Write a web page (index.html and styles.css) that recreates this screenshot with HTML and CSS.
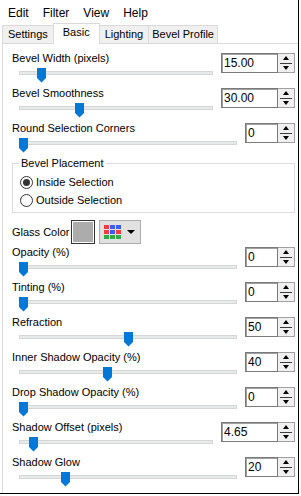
FILE: index.html
```html
<!DOCTYPE html>
<html lang="en">
<head>
    <meta charset="UTF-8">
    <meta name="viewport" content="width=device-width, initial-scale=1.0">
    <title>Inner Bevel</title>
    <link rel="stylesheet" href="styles.css">
</head>
<body>
<div class="window">
    <div class="menubar">
        <span class="menu-item">Edit</span>
        <span class="menu-item">Filter</span>
        <span class="menu-item">View</span>
        <span class="menu-item">Help</span>
    </div>

    <div class="tabs">
        <div class="tab">Settings</div>
        <div class="tab active">Basic</div>
        <div class="tab">Lighting</div>
        <div class="tab">Bevel Profile</div>
    </div>

    <div class="panel">
        <div class="row">
            <div class="row-label">Bevel Width (pixels)</div>
            <div class="slider"><div class="track"></div><svg class="thumb" style="--p:0.097" viewBox="0 0 9 15"><polygon points="0,0 9,0 9,10 4.5,14.5 0,10"/></svg></div>
            <div class="spin"><div class="spin-input">15.00</div><div class="spin-btns"><span class="up"></span><span class="down"></span></div></div>
        </div>

        <div class="row">
            <div class="row-label">Bevel Smoothness</div>
            <div class="slider"><div class="track"></div><svg class="thumb" style="--p:0.303" viewBox="0 0 9 15"><polygon points="0,0 9,0 9,10 4.5,14.5 0,10"/></svg></div>
            <div class="spin"><div class="spin-input">30.00</div><div class="spin-btns"><span class="up"></span><span class="down"></span></div></div>
        </div>

        <div class="row narrow">
            <div class="row-label">Round Selection Corners</div>
            <div class="slider"><div class="track"></div><svg class="thumb" style="--p:0" viewBox="0 0 9 15"><polygon points="0,0 9,0 9,10 4.5,14.5 0,10"/></svg></div>
            <div class="spin"><div class="spin-input">0</div><div class="spin-btns"><span class="up"></span><span class="down"></span></div></div>
        </div>

        <fieldset class="group">
            <legend>Bevel Placement</legend>
            <div class="radio"><span class="dot checked"></span>Inside Selection</div>
            <div class="radio"><span class="dot"></span>Outside Selection</div>
        </fieldset>

        <div class="color-row">
            <span class="color-label">Glass Color</span>
            <span class="swatch"></span>
            <span class="palette-btn">
                <svg width="17" height="14" viewBox="0 0 17 14">
                    <rect x="0" y="0" width="5" height="4" fill="#f23d3d"/>
                    <rect x="6" y="0" width="5" height="4" fill="#3d5cf2"/>
                    <rect x="12" y="0" width="5" height="4" fill="#3d5cf2"/>
                    <rect x="0" y="5" width="5" height="4" fill="#f23d3d"/>
                    <rect x="6" y="5" width="5" height="4" fill="#3d5cf2"/>
                    <rect x="12" y="5" width="5" height="4" fill="#f23d3d"/>
                    <rect x="0" y="10" width="5" height="4" fill="#36a84a"/>
                    <rect x="6" y="10" width="5" height="4" fill="#36a84a"/>
                    <rect x="12" y="10" width="5" height="4" fill="#36a84a"/>
                </svg>
                <span class="caret"></span>
            </span>
        </div>

        <div class="row narrow">
            <div class="row-label">Opacity (%)</div>
            <div class="slider"><div class="track"></div><svg class="thumb" style="--p:0" viewBox="0 0 9 15"><polygon points="0,0 9,0 9,10 4.5,14.5 0,10"/></svg></div>
            <div class="spin"><div class="spin-input">0</div><div class="spin-btns"><span class="up"></span><span class="down"></span></div></div>
        </div>

        <div class="row narrow">
            <div class="row-label">Tinting (%)</div>
            <div class="slider"><div class="track"></div><svg class="thumb" style="--p:0" viewBox="0 0 9 15"><polygon points="0,0 9,0 9,10 4.5,14.5 0,10"/></svg></div>
            <div class="spin"><div class="spin-input">0</div><div class="spin-btns"><span class="up"></span><span class="down"></span></div></div>
        </div>

        <div class="row narrow">
            <div class="row-label">Refraction</div>
            <div class="slider"><div class="track"></div><svg class="thumb" style="--p:0.5" viewBox="0 0 9 15"><polygon points="0,0 9,0 9,10 4.5,14.5 0,10"/></svg></div>
            <div class="spin"><div class="spin-input">50</div><div class="spin-btns"><span class="up"></span><span class="down"></span></div></div>
        </div>

        <div class="row narrow">
            <div class="row-label">Inner Shadow Opacity (%)</div>
            <div class="slider"><div class="track"></div><svg class="thumb" style="--p:0.4" viewBox="0 0 9 15"><polygon points="0,0 9,0 9,10 4.5,14.5 0,10"/></svg></div>
            <div class="spin"><div class="spin-input">40</div><div class="spin-btns"><span class="up"></span><span class="down"></span></div></div>
        </div>

        <div class="row narrow">
            <div class="row-label">Drop Shadow Opacity (%)</div>
            <div class="slider"><div class="track"></div><svg class="thumb" style="--p:0" viewBox="0 0 9 15"><polygon points="0,0 9,0 9,10 4.5,14.5 0,10"/></svg></div>
            <div class="spin"><div class="spin-input">0</div><div class="spin-btns"><span class="up"></span><span class="down"></span></div></div>
        </div>

        <div class="row">
            <div class="row-label">Shadow Offset (pixels)</div>
            <div class="slider"><div class="track"></div><svg class="thumb" style="--p:0.054" viewBox="0 0 9 15"><polygon points="0,0 9,0 9,10 4.5,14.5 0,10"/></svg></div>
            <div class="spin"><div class="spin-input">4.65</div><div class="spin-btns"><span class="up"></span><span class="down"></span></div></div>
        </div>

        <div class="row narrow">
            <div class="row-label">Shadow Glow</div>
            <div class="slider"><div class="track"></div><svg class="thumb" style="--p:0.2" viewBox="0 0 9 15"><polygon points="0,0 9,0 9,10 4.5,14.5 0,10"/></svg></div>
            <div class="spin"><div class="spin-input">20</div><div class="spin-btns"><span class="up"></span><span class="down"></span></div></div>
        </div>
    </div>
</div>
</body>
</html>
```

FILE: styles.css
```css
* {
    box-sizing: border-box;
}

body {
    margin: 0;
    font-family: "Liberation Sans", Arial, sans-serif;
    font-size: 11px;
    color: #000;
    background: #fff;
}

.window {
    width: 299px;
    height: 494px;
    border-right: 1px solid #000;
    border-bottom: 1px solid #000;
    display: flex;
    flex-direction: column;
}

/* menu */
.menubar {
    height: 22px;
    padding-top: 5px;
    line-height: 16px;
    font-size: 12px;
    display: flex;
}

.menu-item {
    padding: 0 6px 0 8px;
}

/* tabs */
.tabs {
    height: 21px;
    display: flex;
    align-items: flex-end;
    padding-left: 2px;
}

.tab {
    height: 18px;
    padding: 0 5px;
    margin-left: -1px;
    border: 1px solid #d9d9d9;
    border-bottom: none;
    background: #f0f0f0;
    line-height: 16px;
    white-space: nowrap;
}

.tab:first-child {
    margin-left: 0;
}

.tab.active {
    height: 21px;
    margin-bottom: -1px;
    padding: 0 9px;
    background: #fff;
    position: relative;
    z-index: 1;
}

.tab:last-child {
    padding: 0 3px;
}

/* panel */
.panel {
    flex: 1;
    margin-left: 2px;
    border-top: 1px solid #d9d9d9;
    border-left: 1px solid #d9d9d9;
    padding: 7px 3px 0 9px;
}

.row {
    display: grid;
    grid-template-columns: 1fr auto;
    grid-template-rows: 14px 21px;
    column-gap: 8px;
    line-height: 14px;
}

.row-label {
    grid-column: 1;
    grid-row: 1;
    white-space: nowrap;
}

.slider {
    grid-column: 1;
    grid-row: 2;
    position: relative;
    margin-left: 7px;
}

.track {
    margin-top: 6px;
    height: 4px;
    background: #e7eaea;
    border: 1px solid #d6d6d6;
}

.thumb {
    position: absolute;
    top: 3px;
    left: calc(var(--p) * (100% - 9px));
    width: 9px;
    height: 15px;
    fill: #0078d7;
}

/* spin box */
.spin {
    grid-column: 2;
    grid-row: 1 / 3;
    display: flex;
    height: 20px;
    margin-top: 2px;
}

.spin-input {
    width: 57px;
    padding-left: 2px;
    border: 1px solid #7a7a7a;
    box-shadow: inset 1px 1px 0 #a0a0a0;
    background: #fff;
    line-height: 18px;
    font-size: 12px;
}

.narrow .spin-input {
    width: 33px;
}

.spin-btns {
    width: 17px;
    display: flex;
    flex-direction: column;
    border: 1px solid #a0a0a0;
    border-left: none;
    background: #f0f0f0;
}

.spin-btns span {
    flex: 1;
    display: flex;
    align-items: center;
    justify-content: center;
}

.spin-btns .down {
    border-top: 1px solid #3c3c3c;
    margin: 0 2px;
}

.spin-btns .up::after,
.spin-btns .down::after {
    content: "";
    border-left: 3px solid transparent;
    border-right: 3px solid transparent;
}

.spin-btns .up::after {
    border-bottom: 4px solid #000;
}

.spin-btns .down::after {
    border-top: 4px solid #000;
}

/* group box */
.group {
    margin: 0;
    padding: 0 0 3px 6px;
    border: 1px solid #dcdcdc;
    line-height: 14px;
}

.group legend {
    padding: 0 2px;
}

.radio {
    display: flex;
    align-items: center;
    height: 18px;
    margin-top: 3px;
}

.radio + .radio {
    margin-top: 0;
}

.dot {
    width: 13px;
    height: 13px;
    margin: 0 3px 0 1px;
    border: 1px solid #333;
    border-radius: 50%;
    display: flex;
    align-items: center;
    justify-content: center;
}

.dot.checked::after {
    content: "";
    width: 7px;
    height: 7px;
    border-radius: 50%;
    background: #333;
}

/* glass color */
.color-row {
    display: flex;
    align-items: center;
    height: 24px;
    margin: 7px 0 1px;
}

.color-label {
    width: 59px;
    white-space: nowrap;
}

.swatch {
    width: 24px;
    height: 24px;
    border: 1px solid #333;
    box-shadow: inset 0 0 0 1px #fff;
    background: #acacac;
}

.palette-btn {
    width: 42px;
    height: 24px;
    margin-left: 4px;
    padding-left: 4px;
    display: flex;
    align-items: center;
    gap: 6px;
    border: 1px solid #adadad;
    background: #e1e1e1;
}

.caret {
    border-left: 4px solid transparent;
    border-right: 4px solid transparent;
    border-top: 4px solid #000;
}
```
